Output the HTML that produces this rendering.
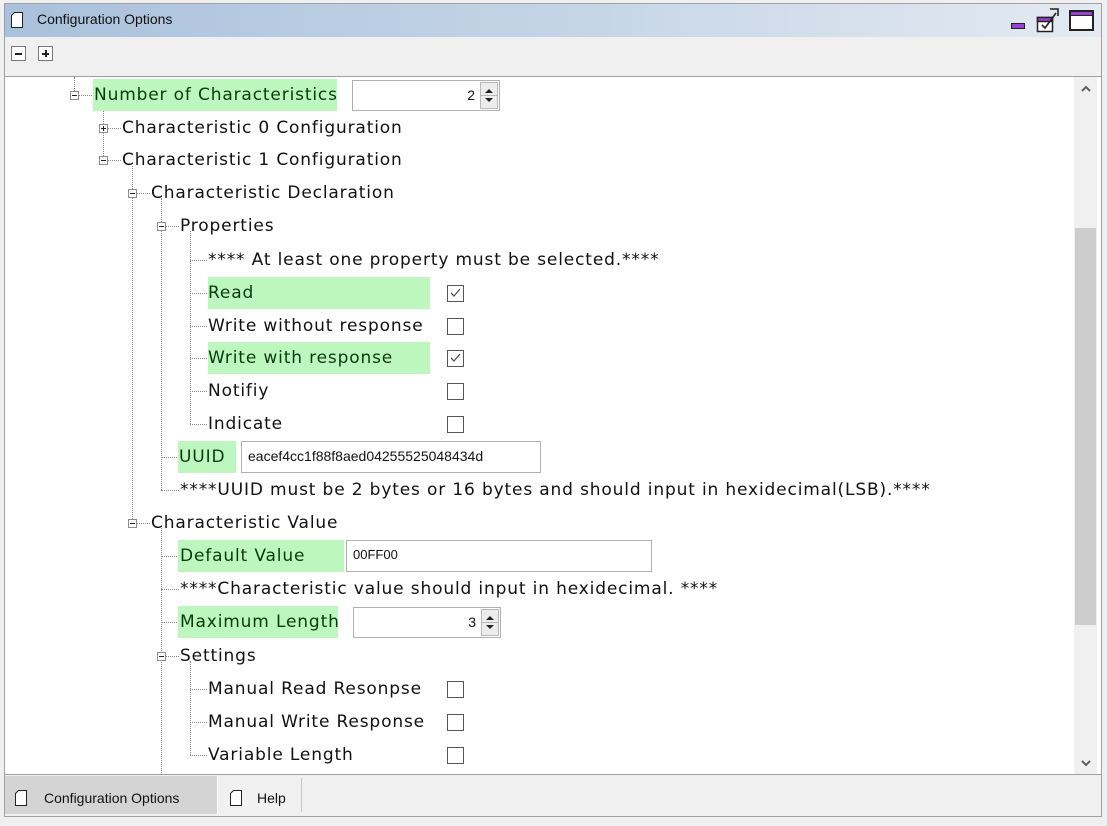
<!DOCTYPE html>
<html><head><meta charset="utf-8"><style>
*{margin:0;padding:0;box-sizing:border-box}
body{width:1107px;height:826px;background:#f0f0f0;position:relative;overflow:hidden;font-family:"DejaVu Sans","Liberation Sans",sans-serif}
.a{position:absolute}
.win{left:4px;top:3px;width:1098px;height:814px;border:1px solid #a0a0a0;background:#f0f0f0}
.title{left:5px;top:4px;width:1096px;height:33px;background:linear-gradient(90deg,#a9c1dc 0%,#c4d4e6 50%,#e4eaf2 100%);}
.tt{font-family:"Liberation Sans",sans-serif;font-size:14px;color:#111;}
.content{left:5px;top:76px;width:1096px;height:699px;background:#fff;border-top:1px solid #a0a0a0;border-bottom:1px solid #a0a0a0}
.t{position:absolute;font-size:17px;letter-spacing:0.85px;line-height:22px;height:22px;color:#111;white-space:nowrap}
.g{background:#bdf7bd;color:#0a3a0a}
.vl{position:absolute;width:0;border-left:1px dotted #888}
.hl{position:absolute;height:0;border-top:1px dotted #888}
.bx{position:absolute;width:9px;height:9px;border:1px solid #8c8c8c;background:#fff}
.bx:before{content:"";position:absolute;left:1px;top:3px;width:5px;height:1px;background:#222}
.bx.p:after{content:"";position:absolute;left:3px;top:1px;width:1px;height:5px;background:#222}
.cb{position:absolute;width:17px;height:17px;border:1px solid #555;background:#fff}
.inp{position:absolute;border:1px solid #b0b0b0;background:#fff;font-family:"Liberation Sans",sans-serif;font-size:13px;line-height:28px;padding-left:6px;color:#111}
.sp{position:absolute;width:18px;border:1px solid #b8b8b8;background:#ececec}
</style></head><body>
<div class="a win"></div>
<div class="a title"></div>
<svg class="a" style="left:11px;top:12px" width="12" height="16"><path d="M3.5 0.5H11.5V15.5H0.5V3.5Z" fill="#fff" stroke="#222"/></svg>
<div class="a tt" style="left:37px;top:11px">Configuration Options</div>
<div class="a" style="left:1011px;top:23px;width:14px;height:6px;background:#9b3ed6;border:1px solid #222"></div>
<svg class="a" style="left:1035px;top:6px" width="26" height="28"><rect x="2.5" y="11.5" width="15" height="14" fill="#fff" stroke="#222" stroke-width="1.5"/><rect x="2.5" y="11.5" width="15" height="4" fill="#9b3ed6" stroke="#222" stroke-width="1.5"/><path d="M7 19l3 3 11-15M15 3h8v7" fill="none" stroke="#222" stroke-width="1.6"/></svg>
<div class="a" style="left:1069px;top:10px;width:25px;height:21px;border:2px solid #222;background:#fff"><div style="height:4px;background:#9b3ed6;border-bottom:1px solid #222"></div></div>
<div class="a" style="left:11px;top:46px;width:15px;height:15px;border:1px solid #777;background:#fff"><div class="a" style="left:3px;top:6px;width:7px;height:2px;background:#222"></div></div>
<div class="a" style="left:38px;top:46px;width:15px;height:15px;border:1px solid #777;background:#fff"><div class="a" style="left:3px;top:6px;width:7px;height:2px;background:#222"></div><div class="a" style="left:6px;top:3px;width:2px;height:7px;background:#222"></div></div>
<div class="a content"></div>
<div class="a" style="left:1074px;top:77px;width:23px;height:697px;background:#f0f0f0"></div>
<div class="a" style="left:1075px;top:228px;width:21px;height:397px;background:#cdcdcd"></div>
<svg class="a" style="left:1080px;top:84px" width="12" height="10"><path d="M2 7l4-4 4 4" fill="none" stroke="#606060" stroke-width="2"/></svg>
<svg class="a" style="left:1080px;top:758px" width="12" height="10"><path d="M2 3l4 4 4-4" fill="none" stroke="#606060" stroke-width="2"/></svg>
<div class="vl" style="left:74px;top:77px;height:14px"></div>
<div class="vl" style="left:103px;top:101px;height:59px"></div>
<div class="vl" style="left:132px;top:166px;height:357px"></div>
<div class="vl" style="left:161px;top:198px;height:292px"></div>
<div class="vl" style="left:161px;top:528px;height:247px"></div>
<div class="vl" style="left:190px;top:231px;height:193px"></div>
<div class="vl" style="left:190px;top:661px;height:94px"></div>
<div class="hl" style="left:79px;top:95px;width:13px"></div>
<div class="hl" style="left:108px;top:128px;width:13px"></div>
<div class="hl" style="left:108px;top:160px;width:13px"></div>
<div class="hl" style="left:137px;top:193px;width:13px"></div>
<div class="hl" style="left:137px;top:523px;width:13px"></div>
<div class="hl" style="left:166px;top:226px;width:13px"></div>
<div class="hl" style="left:161px;top:457px;width:16px"></div>
<div class="hl" style="left:161px;top:490px;width:18px"></div>
<div class="hl" style="left:161px;top:556px;width:16px"></div>
<div class="hl" style="left:161px;top:589px;width:18px"></div>
<div class="hl" style="left:161px;top:622px;width:16px"></div>
<div class="hl" style="left:166px;top:656px;width:13px"></div>
<div class="hl" style="left:190px;top:260px;width:17px"></div>
<div class="hl" style="left:190px;top:293px;width:17px"></div>
<div class="hl" style="left:190px;top:326px;width:17px"></div>
<div class="hl" style="left:190px;top:358px;width:17px"></div>
<div class="hl" style="left:190px;top:391px;width:17px"></div>
<div class="hl" style="left:190px;top:424px;width:17px"></div>
<div class="hl" style="left:190px;top:689px;width:17px"></div>
<div class="hl" style="left:190px;top:722px;width:17px"></div>
<div class="hl" style="left:190px;top:755px;width:17px"></div>
<div class="bx" style="left:70px;top:91px"></div>
<div class="bx p" style="left:99px;top:124px"></div>
<div class="bx" style="left:99px;top:156px"></div>
<div class="bx" style="left:128px;top:189px"></div>
<div class="bx" style="left:157px;top:222px"></div>
<div class="bx" style="left:128px;top:519px"></div>
<div class="bx" style="left:157px;top:652px"></div>
<div class="a g" style="left:93px;top:79px;width:244px;height:32px"></div>
<div class="a g" style="left:208px;top:277px;width:222px;height:32px"></div>
<div class="a g" style="left:208px;top:342px;width:222px;height:32px"></div>
<div class="a g" style="left:178px;top:441px;width:58px;height:32px"></div>
<div class="a g" style="left:178px;top:540px;width:166px;height:32px"></div>
<div class="a g" style="left:178px;top:606px;width:160px;height:32px"></div>
<div class="t" style="left:94px;top:84px;color:#0a3a0a">Number of Characteristics</div>
<div class="t" style="left:122px;top:117px">Characteristic 0 Configuration</div>
<div class="t" style="left:122px;top:149px">Characteristic 1 Configuration</div>
<div class="t" style="left:151px;top:182px">Characteristic Declaration</div>
<div class="t" style="left:180px;top:215px">Properties</div>
<div class="t" style="left:208px;top:249px">**** At least one property must be selected.****</div>
<div class="t" style="left:208px;top:282px;color:#0a3a0a">Read</div>
<div class="t" style="left:208px;top:315px">Write without response</div>
<div class="t" style="left:208px;top:347px;color:#0a3a0a">Write with response</div>
<div class="t" style="left:208px;top:380px">Notifiy</div>
<div class="t" style="left:208px;top:413px">Indicate</div>
<div class="t" style="left:179px;top:446px;color:#0a3a0a">UUID</div>
<div class="t" style="left:180px;top:479px">****UUID must be 2 bytes or 16 bytes and should input in hexidecimal(LSB).****</div>
<div class="t" style="left:151px;top:512px">Characteristic Value</div>
<div class="t" style="left:180px;top:545px;color:#0a3a0a">Default Value</div>
<div class="t" style="left:180px;top:578px">****Characteristic value should input in hexidecimal. ****</div>
<div class="t" style="left:180px;top:611px;color:#0a3a0a">Maximum Length</div>
<div class="t" style="left:180px;top:645px">Settings</div>
<div class="t" style="left:208px;top:678px">Manual Read Resonpse</div>
<div class="t" style="left:208px;top:711px">Manual Write Response</div>
<div class="t" style="left:208px;top:744px">Variable Length</div>
<div class="cb" style="left:447px;top:285px"><svg width="15" height="15"><path d="M3 7l3 3 6-7" fill="none" stroke="#555" stroke-width="1.3"/></svg></div>
<div class="cb" style="left:447px;top:318px"></div>
<div class="cb" style="left:447px;top:350px"><svg width="15" height="15"><path d="M3 7l3 3 6-7" fill="none" stroke="#555" stroke-width="1.3"/></svg></div>
<div class="cb" style="left:447px;top:383px"></div>
<div class="cb" style="left:447px;top:416px"></div>
<div class="cb" style="left:447px;top:681px"></div>
<div class="cb" style="left:447px;top:714px"></div>
<div class="cb" style="left:447px;top:747px"></div>
<div class="inp" style="left:352px;top:80px;width:148px;height:31px;text-align:right;padding-right:24px;font-size:14px">2</div>
<div class="sp" style="left:480px;top:82px;height:27px"><svg width="16" height="25"><path d="M4 10l4-4 4 4z M4 15l4 4 4-4z" fill="#222"/><path d="M0 12.5h16" stroke="#b8b8b8"/></svg></div>
<div class="inp" style="left:241px;top:441px;width:300px;height:32px;font-size:14px">eacef4cc1f88f8aed04255525048434d</div>
<div class="inp" style="left:346px;top:540px;width:306px;height:32px">00FF00</div>
<div class="inp" style="left:353px;top:607px;width:148px;height:31px;text-align:right;padding-right:24px;font-size:14px">3</div>
<div class="sp" style="left:481px;top:609px;height:27px"><svg width="16" height="25"><path d="M4 10l4-4 4 4z M4 15l4 4 4-4z" fill="#222"/><path d="M0 12.5h16" stroke="#b8b8b8"/></svg></div>
<div class="a" style="left:5px;top:776px;width:212px;height:38px;background:#d4d4d4"></div>
<div class="a" style="left:217px;top:776px;width:1px;height:38px;background:#fff"></div>
<div class="a" style="left:301px;top:778px;width:1px;height:34px;background:#c8c8c8"></div>
<svg class="a" style="left:15px;top:790px" width="12" height="16"><path d="M3.5 0.5H11.5V15.5H0.5V3.5Z" fill="#fff" stroke="#222"/></svg>
<div class="a tt" style="left:44px;top:790px;font-size:14px">Configuration Options</div>
<svg class="a" style="left:230px;top:790px" width="12" height="16"><path d="M3.5 0.5H11.5V15.5H0.5V3.5Z" fill="#fff" stroke="#222"/></svg>
<div class="a tt" style="left:257px;top:790px;font-size:14px">Help</div>
</body></html>
